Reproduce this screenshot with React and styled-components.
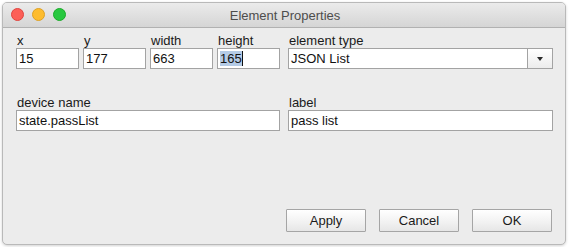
import React from 'react';
import styled, { createGlobalStyle } from 'styled-components';

const GlobalStyle = createGlobalStyle`
    html, body {
        margin: 0;
        padding: 0;
        background: #ffffff;
    }
    body {
        font-family: "Liberation Sans", Arial, sans-serif;
    }
`;

const Page = styled.div`
    padding: 2px 0 0 2px;
    width: 570px;
    height: 247px;
    box-sizing: border-box;
`;

const Window = styled.div`
    width: 564px;
    height: 243px;
    box-sizing: border-box;
    border: 1px solid #b9b9b9;
    border-radius: 5px;
    background: #ececec;
    box-shadow: 0 1px 3px rgba(0, 0, 0, 0.18);
    display: flex;
    flex-direction: column;
    overflow: hidden;
`;

const TitleBar = styled.div`
    position: relative;
    height: 24px;
    flex: none;
    background: linear-gradient(#ebebeb, #d5d5d5);
    border-bottom: 1px solid #b1b1b1;
    display: flex;
    align-items: center;
    justify-content: center;
`;

const Lights = styled.div`
    position: absolute;
    left: 8px;
    top: 5px;
    display: flex;
    gap: 8px;
`;

const Light = styled.span`
    width: 11px;
    height: 11px;
    border-radius: 50%;
    background: ${p => p.$fill};
    border: 0.5px solid ${p => p.$edge};
`;

const Title = styled.div`
    font-size: 13px;
    color: #4d4d4d;
    padding-left: 2px;
`;

const Body = styled.div`
    flex: 1;
    display: flex;
    flex-direction: column;
    padding: 6px 12px 12px 13px;
`;

const Grid = styled.div`
    display: grid;
    grid-template-columns: 264px 265px;
    column-gap: 8px;
    row-gap: 27px;
`;

const Quad = styled.div`
    display: grid;
    grid-template-columns: repeat(4, 1fr);
    column-gap: 4px;
`;

const Field = styled.div`
    display: flex;
    flex-direction: column;
`;

const Label = styled.div`
    font-size: 13px;
    line-height: 14px;
    color: #1a1a1a;
    padding-left: 1px;
`;

const Box = styled.div`
    height: 21px;
    box-sizing: border-box;
    border: 1px solid #a3a3a3;
    background: #ffffff;
    font-size: 13px;
    line-height: 19px;
    color: #111;
    padding-left: 2px;
    display: flex;
    align-items: center;
    white-space: nowrap;
`;

const Selected = styled.span`
    background: #b4cbe6;
    line-height: 15px;
    border-right: 1px solid #111;
`;

const SelectBox = styled(Box)`
    justify-content: space-between;
    padding-right: 0;
`;

const Arrow = styled.span`
    width: 24px;
    height: 19px;
    border-left: 1px solid #a3a3a3;
    background: linear-gradient(#ffffff, #ececec);
    display: flex;
    align-items: center;
    justify-content: center;
    &::after {
        content: '';
        border-left: 3.5px solid transparent;
        border-right: 3.5px solid transparent;
        border-top: 4px solid #2a2a2a;
    }
`;

const Footer = styled.div`
    margin-top: auto;
    display: flex;
    justify-content: flex-end;
    gap: 13px;
    padding-right: 1px;
`;

const Button = styled.button`
    width: 80px;
    height: 23px;
    box-sizing: border-box;
    border: 1px solid #a5a5a5;
    border-radius: 1px;
    background: linear-gradient(#ffffff, #f1f1f1 60%, #e6e6e6);
    font-family: "Liberation Sans", Arial, sans-serif;
    font-size: 13px;
    color: #1a1a1a;
    padding: 0;
`;

const App = () => {
    return (
        <Page>
            <GlobalStyle />
            <Window>
                <TitleBar>
                    <Lights>
                        <Light $fill="#fc5f57" $edge="#e0443e" />
                        <Light $fill="#fdbc2e" $edge="#dea123" />
                        <Light $fill="#28c840" $edge="#1aab29" />
                    </Lights>
                    <Title>Element Properties</Title>
                </TitleBar>
                <Body>
                    <Grid>
                        <Quad>
                            <Field>
                                <Label>x</Label>
                                <Box>15</Box>
                            </Field>
                            <Field>
                                <Label>y</Label>
                                <Box>177</Box>
                            </Field>
                            <Field>
                                <Label>width</Label>
                                <Box>663</Box>
                            </Field>
                            <Field>
                                <Label>height</Label>
                                <Box><Selected>165</Selected></Box>
                            </Field>
                        </Quad>
                        <Field>
                            <Label>element type</Label>
                            <SelectBox>
                                JSON List
                                <Arrow />
                            </SelectBox>
                        </Field>
                        <Field>
                            <Label>device name</Label>
                            <Box>state.passList</Box>
                        </Field>
                        <Field>
                            <Label>label</Label>
                            <Box>pass list</Box>
                        </Field>
                    </Grid>
                    <Footer>
                        <Button>Apply</Button>
                        <Button>Cancel</Button>
                        <Button>OK</Button>
                    </Footer>
                </Body>
            </Window>
        </Page>
    );
};

export default App;
